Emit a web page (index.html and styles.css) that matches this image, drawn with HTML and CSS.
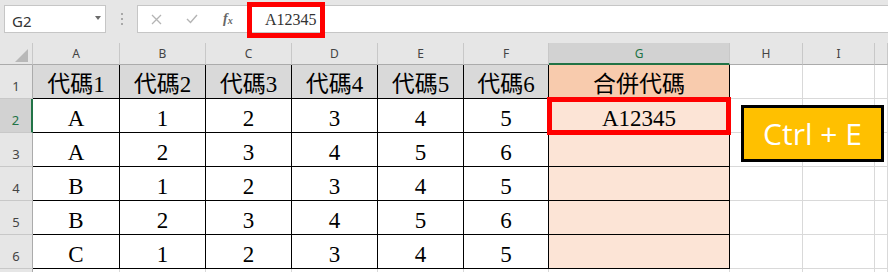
FILE: index.html
```html
<!DOCTYPE html>
<html>

<head>
  <meta charset="utf-8">
  <meta name="viewport" content="width=device-width, initial-scale=1.0">
  <link rel="stylesheet" href="styles.css">
</head>

<body>
  <div class="toolbar">
    <div class="name-box"><span>G2</span><i class="caret"></i></div>
    <div class="grip"><b></b><b></b><b></b></div>
    <div class="formula-box">
      <div class="fx-buttons">
        <svg class="icon" width="11" height="11" viewBox="0 0 11 11">
          <path d="M1 1 L10 10 M10 1 L1 10" stroke="#b4b4b4" stroke-width="1.3" fill="none" />
        </svg>
        <svg class="icon check" width="12" height="10" viewBox="0 0 12 10">
          <path d="M1 5 L4.5 8.5 L11 1" stroke="#b4b4b4" stroke-width="1.4" fill="none" />
        </svg>
        <span class="fx">f<sub>x</sub></span>
      </div>
      <div class="formula-input">A12345</div>
    </div>
    <div class="mark mark-formula"></div>
  </div>

  <div class="sheet">
    <!-- column headers -->
    <div class="corner"><i></i></div>
    <div class="col-head">A</div>
    <div class="col-head">B</div>
    <div class="col-head">C</div>
    <div class="col-head">D</div>
    <div class="col-head">E</div>
    <div class="col-head">F</div>
    <div class="col-head active">G</div>
    <div class="col-head">H</div>
    <div class="col-head">I</div>
    <div class="col-head"></div>

    <!-- row 1 -->
    <div class="row-head">1</div>
    <div class="cell boxed title">代碼1</div>
    <div class="cell boxed title">代碼2</div>
    <div class="cell boxed title">代碼3</div>
    <div class="cell boxed title">代碼4</div>
    <div class="cell boxed title">代碼5</div>
    <div class="cell boxed title">代碼6</div>
    <div class="cell boxed merge-title">合併代碼</div>
    <div class="cell"></div>
    <div class="cell"></div>
    <div class="cell"></div>

    <!-- row 2 -->
    <div class="row-head active">2</div>
    <div class="cell boxed">A</div>
    <div class="cell boxed">1</div>
    <div class="cell boxed">2</div>
    <div class="cell boxed">3</div>
    <div class="cell boxed">4</div>
    <div class="cell boxed">5</div>
    <div class="cell boxed merge current">A12345<div class="mark mark-cell"></div></div>
    <div class="cell anchor"><div class="badge">Ctrl + E</div></div>
    <div class="cell"></div>
    <div class="cell"></div>

    <!-- row 3 -->
    <div class="row-head">3</div>
    <div class="cell boxed">A</div>
    <div class="cell boxed">2</div>
    <div class="cell boxed">3</div>
    <div class="cell boxed">4</div>
    <div class="cell boxed">5</div>
    <div class="cell boxed">6</div>
    <div class="cell boxed merge"></div>
    <div class="cell"></div>
    <div class="cell"></div>
    <div class="cell"></div>

    <!-- row 4 -->
    <div class="row-head">4</div>
    <div class="cell boxed">B</div>
    <div class="cell boxed">1</div>
    <div class="cell boxed">2</div>
    <div class="cell boxed">3</div>
    <div class="cell boxed">4</div>
    <div class="cell boxed">5</div>
    <div class="cell boxed merge"></div>
    <div class="cell"></div>
    <div class="cell"></div>
    <div class="cell"></div>

    <!-- row 5 -->
    <div class="row-head">5</div>
    <div class="cell boxed">B</div>
    <div class="cell boxed">2</div>
    <div class="cell boxed">3</div>
    <div class="cell boxed">4</div>
    <div class="cell boxed">5</div>
    <div class="cell boxed">6</div>
    <div class="cell boxed merge"></div>
    <div class="cell"></div>
    <div class="cell"></div>
    <div class="cell"></div>

    <!-- row 6 -->
    <div class="row-head">6</div>
    <div class="cell boxed">C</div>
    <div class="cell boxed">1</div>
    <div class="cell boxed">2</div>
    <div class="cell boxed">3</div>
    <div class="cell boxed">4</div>
    <div class="cell boxed">5</div>
    <div class="cell boxed merge"></div>
    <div class="cell"></div>
    <div class="cell"></div>
    <div class="cell"></div>

    <!-- row 7, only its top edge fits -->
    <div class="row-head"></div>
    <div class="cell"></div>
    <div class="cell"></div>
    <div class="cell"></div>
    <div class="cell"></div>
    <div class="cell"></div>
    <div class="cell"></div>
    <div class="cell"></div>
    <div class="cell"></div>
    <div class="cell"></div>
    <div class="cell"></div>
  </div>
</body>

</html>
```

FILE: styles.css
```css
html,
body {
  margin: 0;
  width: 888px;
  height: 272px;
  overflow: hidden;
  background: #fff;
  font-family: "Noto Sans", sans-serif;
}

/* formula bar */

.toolbar {
  position: relative;
  display: flex;
  align-items: flex-start;
  height: 43px;
  box-sizing: border-box;
  padding: 5px 0 0 4px;
  background: #e6e6e6;
}

.name-box {
  width: 102px;
  height: 28px;
  box-sizing: border-box;
  border: 1px solid #c6c6c6;
  background: #fff;
  display: flex;
  align-items: center;
  justify-content: space-between;
  padding: 3px 4px 0 7px;
  font-size: 15px;
  color: #333;
}

.caret {
  width: 0;
  height: 0;
  border-left: 3px solid transparent;
  border-right: 3px solid transparent;
  border-top: 4px solid #6a6a6a;
  margin-bottom: 6px;
}

.grip {
  width: 31px;
  height: 28px;
  display: flex;
  flex-direction: column;
  align-items: center;
  justify-content: center;
  gap: 3px;
}

.grip b {
  width: 2px;
  height: 2px;
  background: #a8a8a8;
}

.formula-box {
  flex: 1;
  height: 28px;
  box-sizing: border-box;
  border: 1px solid #c6c6c6;
  border-right: 0;
  background: #fff;
  display: flex;
  align-items: center;
}

.fx-buttons {
  width: 110px;
  box-sizing: border-box;
  padding-left: 13px;
  display: flex;
  align-items: center;
}

.icon {
  display: block;
}

.check {
  margin-left: 24px;
}

.fx {
  margin-left: 25px;
  font-family: "Liberation Serif", serif;
  font-style: italic;
  font-weight: bold;
  font-size: 14px;
  color: #666;
}

.fx sub {
  font-size: 10px;
  vertical-align: -1px;
}

.formula-input {
  padding: 2px 0 0 17px;
  font-family: "Liberation Serif", serif;
  font-size: 16px;
  color: #333;
}

.mark {
  position: absolute;
  box-sizing: border-box;
  border: 5px solid #ff0000;
  z-index: 2;
}

.mark-formula {
  left: 247px;
  top: 2px;
  width: 78px;
  height: 36px;
}

.mark-cell {
  left: -2px;
  top: -2px;
  width: 184px;
  height: 38px;
}

/* sheet grid */

.sheet {
  display: grid;
  height: 229px;
  overflow: hidden;
  grid-template-columns: 33px 87px 86px 86px 86px 86px 85px 181px 73px 72px 1fr;
  grid-template-rows: 22px repeat(6, 34px) 1fr;
}

.sheet > div {
  box-sizing: border-box;
}

.corner,
.col-head {
  background: #e6e6e6;
  border-right: 1px solid #c8c8c8;
  border-bottom: 1px solid #ababab;
}

.corner {
  display: flex;
  justify-content: flex-end;
  align-items: flex-end;
  padding: 0 4px 2px 0;
}

.corner i {
  width: 0;
  height: 0;
  border-left: 13px solid transparent;
  border-bottom: 13px solid #b8b8b8;
}

.col-head {
  display: flex;
  align-items: center;
  justify-content: center;
  font-size: 12px;
  color: #444;
}

.col-head.active {
  background: #d2d2d2;
  color: #217346;
  border-bottom: 2px solid #217346;
}

.row-head {
  background: #e6e6e6;
  border-right: 1px solid #ababab;
  border-bottom: 1px solid #c8c8c8;
  display: flex;
  align-items: flex-end;
  justify-content: center;
  padding-bottom: 3px;
  font-size: 13px;
  color: #444;
}

.row-head.active {
  background: #d2d2d2;
  color: #217346;
  border-right: 2px solid #217346;
}

.cell {
  background: #fff;
  border-right: 1px solid #d9d9d9;
  border-bottom: 1px solid #d9d9d9;
  display: flex;
  align-items: flex-end;
  justify-content: center;
  font-family: "Liberation Serif", "Noto Sans CJK TC", serif;
  font-size: 23px;
  line-height: 26px;
  color: #000;
}

.cell.boxed {
  border-color: #000;
}

.cell.title {
  background: #d9d9d9;
}

.cell.merge-title {
  background: #f8cbad;
}

.cell.merge {
  background: #fce4d6;
}

.current,
.anchor {
  position: relative;
}

.badge {
  position: absolute;
  left: 11px;
  top: 6px;
  width: 143px;
  height: 57px;
  box-sizing: border-box;
  border: 3px solid #000;
  background: #ffc000;
  color: #fff;
  display: flex;
  align-items: center;
  justify-content: center;
  font-family: "Open Sans", sans-serif;
  font-size: 30px;
  line-height: 1;
  z-index: 3;
}
```
